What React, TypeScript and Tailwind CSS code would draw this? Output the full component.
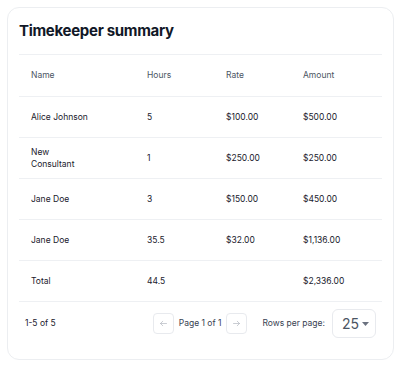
import React from "react";

type Row = { name: React.ReactNode; hours: string; rate: string; amount: string };

const rows: Row[] = [
  { name: "Alice Johnson", hours: "5", rate: "$100.00", amount: "$500.00" },
  {
    name: (
      <>
        New
        <br />
        Consultant
      </>
    ),
    hours: "1",
    rate: "$250.00",
    amount: "$250.00",
  },
  { name: "Jane Doe", hours: "3", rate: "$150.00", amount: "$450.00" },
  { name: "Jane Doe", hours: "35.5", rate: "$32.00", amount: "$1,136.00" },
  { name: "Total", hours: "44.5", rate: "", amount: "$2,336.00" },
];

const cols = "grid grid-cols-[116px_79px_77px_1fr] items-center";

function ArrowButton({ dir }: { dir: "left" | "right" }) {
  return (
    <button className="w-[21px] h-[21px] rounded-[4px] border border-[#e8eaee] flex items-center justify-center text-[#b0b5bd]">
      <svg width="9" height="9" viewBox="0 0 24 24" fill="none" stroke="currentColor" strokeWidth="1.8" strokeLinecap="round" strokeLinejoin="round">
        {dir === "left" ? (
          <>
            <path d="M20 12H4" />
            <path d="M10 6l-6 6 6 6" />
          </>
        ) : (
          <>
            <path d="M4 12h16" />
            <path d="M14 6l6 6-6 6" />
          </>
        )}
      </svg>
    </button>
  );
}

export default function App() {
  return (
    <div className="w-[400px] h-[365px] bg-white p-[7px] font-['Inter',sans-serif]">
      <div className="w-[387px] h-[353px] rounded-[12px] border border-[#eceef1] px-[11px] pt-[12px] flex flex-col">
        <h2 className="text-[15px] leading-[22px] font-bold text-[#111827] tracking-[-0.3px] mb-[12px]">
          Timekeeper summary
        </h2>
        <div className="text-[8.5px] text-[#1a202c]">
          <div className={`${cols} h-[42px] border-t border-[#eef0f3] text-[#4b5563]`}>
            <div className="pl-[12px]">Name</div>
            <div className="pl-[12px]">Hours</div>
            <div className="pl-[12px]">Rate</div>
            <div className="pl-[12px]">Amount</div>
          </div>
          {rows.map((r, i) => (
            <div key={i} className={`${cols} h-[41px] border-t border-[#eef0f3]`}>
              <div className="pl-[12px] leading-[12px] whitespace-nowrap">{r.name}</div>
              <div className="pl-[12px]">{r.hours}</div>
              <div className="pl-[12px]">{r.rate}</div>
              <div className="pl-[12px]">{r.amount}</div>
            </div>
          ))}
        </div>
        <div className="border-t border-[#eef0f3] pt-[7px] px-[6px] flex items-center h-[37px] text-[8.5px] text-[#1a202c]">
          <div className="flex-1">1-5 of 5</div>
          <div className="flex items-center">
            <ArrowButton dir="left" />
            <span className="text-[#374151] mx-[5px]">Page 1 of 1</span>
            <ArrowButton dir="right" />
          </div>
          <div className="flex items-center ml-[15px]">
            <span className="text-[#374151] mr-[7px]">Rows per page:</span>
            <div className="w-[44px] h-[29px] rounded-[6px] border border-[#e8eaee] flex items-center pl-[9px] pr-[6px]">
              <span className="text-[14px] text-[#4b5563] flex-1">25</span>
              <svg width="7" height="4" viewBox="0 0 7 4">
                <path d="M0 0h7L3.5 4z" fill="#6b7280" />
              </svg>
            </div>
          </div>
        </div>
      </div>
    </div>
  );
}
